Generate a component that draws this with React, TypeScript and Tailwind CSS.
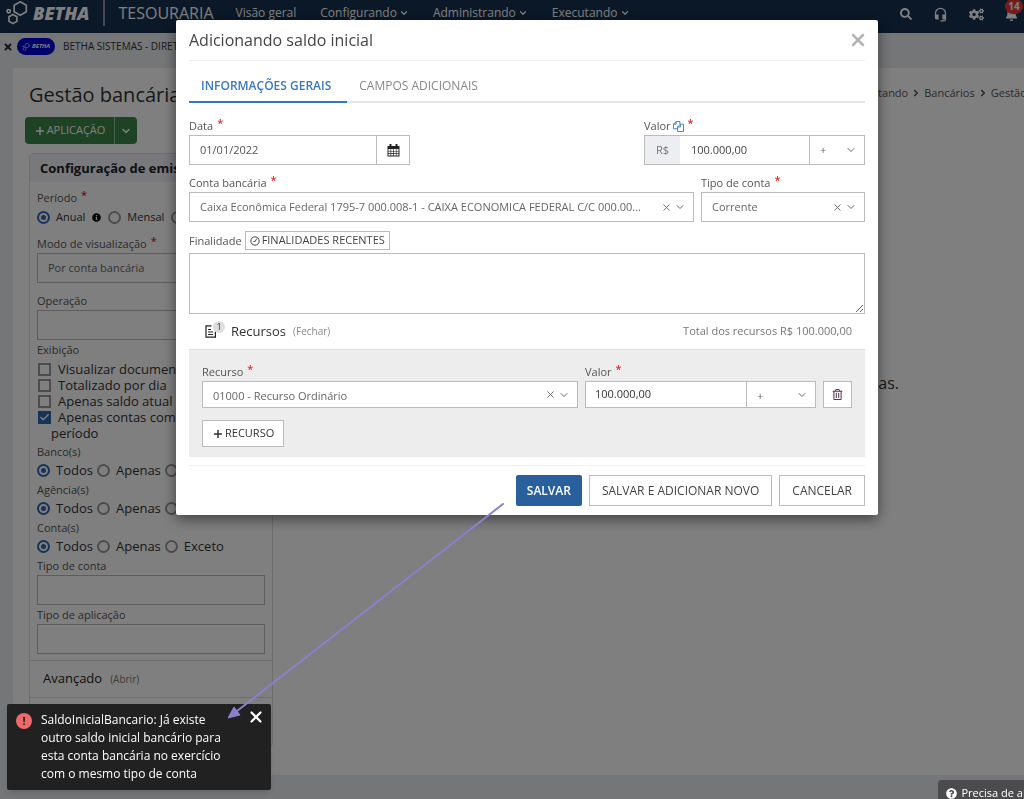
import type { ReactNode } from "react";
import { Check, ChevronDown, ChevronRight, Plus, X } from "lucide-react";
import { FaBell, FaCogs, FaInfoCircle, FaQuestionCircle, FaRegTrashAlt, FaSearch } from "react-icons/fa";
import { MdHeadsetMic } from "react-icons/md";

interface FieldLabelProps {
  htmlFor?: string;
  required?: boolean;
  children: ReactNode;
}

function FieldLabel({ htmlFor, required, children }: FieldLabelProps) {
  return (
    <label htmlFor={htmlFor} className="flex h-[19px] items-center pt-[2px] text-[11px] font-medium text-[#555]">
      {children}
      {required && <span className="mb-2 ml-1 text-[11px] leading-none font-semibold text-[#e02b2b]">*</span>}
    </label>
  );
}

interface SelectBoxProps {
  id: string;
  value: string;
  label?: string;
  clearable?: boolean;
  className?: string;
}

function SelectBox({ id, value, label, clearable, className = "h-[30px]" }: SelectBoxProps) {
  return (
    <div className={`relative border border-[#bbb] bg-white ${className}`}>
      <select
        id={id}
        aria-label={label}
        className="h-full w-full appearance-none truncate bg-transparent pr-8 pl-[10px] text-[11px] text-[#666] outline-none"
      >
        <option>{value}</option>
      </select>
      <div className="pointer-events-none absolute inset-y-0 right-[7px] flex items-center gap-[2px] text-[#666]">
        {clearable && (
          <button type="button" aria-label="Limpar" className="pointer-events-auto">
            <X className="size-[11px]" strokeWidth={2} />
          </button>
        )}
        <ChevronDown className="size-3" strokeWidth={2} />
      </div>
    </div>
  );
}

interface RadioProps {
  name: string;
  label: string;
  checked?: boolean;
  small?: boolean;
}

function Radio({ name, label, checked, small }: RadioProps) {
  return (
    <label className={`flex items-center gap-[6px] text-[#333] ${small ? "text-[11px]" : "text-[13px]"}`}>
      <input
        type="radio"
        name={name}
        defaultChecked={checked}
        className="size-[13px] appearance-none rounded-full border-2 border-[#999] bg-clip-content p-[2px] checked:border-[#2f67b5] checked:bg-[#2f67b5]"
      />
      {label}
    </label>
  );
}

function RadioGroup({ title, name }: { title: string; name: string }) {
  return (
    <fieldset>
      <legend className="h-[19px] text-[11px] leading-[19px] font-medium text-[#555]">{title}</legend>
      <div className="flex h-[19px] items-center gap-1">
        <Radio name={name} label="Todos" checked />
        <Radio name={name} label="Apenas" />
        <Radio name={name} label="Exceto" />
      </div>
    </fieldset>
  );
}

function CheckItem({ label, checked }: { label: string; checked?: boolean }) {
  return (
    <label className="relative block pl-[14px] text-[13px] leading-4 text-[#333]">
      <input
        type="checkbox"
        defaultChecked={checked}
        className="peer absolute top-[2px] left-[1px] size-[13px] appearance-none border-2 border-[#999] checked:border-[#2f67b5] checked:bg-[#2f67b5]"
      />
      <Check className="absolute top-[3px] left-[2px] hidden size-[11px] text-white peer-checked:block" strokeWidth={3} />
      <span className="ml-[7px]">{label}</span>
    </label>
  );
}

function HexLogo({ className }: { className: string }) {
  return (
    <svg viewBox="0 0 24 26" className={className} fill="none" stroke="currentColor" strokeWidth="1.8" aria-hidden="true">
      <path d="M15.5.9l6.6 3.8v7l-6.6 3.8-6.6-3.8v-7z" />
      <path d="M7.6 14.6l4.3 2.5v4.9l-4.3 2.5-4.3-2.5v-4.9z" />
      <circle cx="3" cy="11" r="1.8" />
    </svg>
  );
}

function TopBar() {
  const menus = ["Configurando", "Administrando", "Executando"];

  return (
    <header className="flex h-[33px] items-center bg-[#15304f] pb-[7px] pl-[5px] text-white">
      <HexLogo className="h-6 w-6" />
      <span className="ml-1 text-[18px] leading-6 font-extrabold italic">BETHA</span>
      <span className="ml-[14px] h-[26px] w-[2px] bg-[#8b93a8]" />
      <span className="ml-[13px] text-base leading-6">TESOURARIA</span>
      <nav className="ml-[22px] flex gap-6 text-xs">
        <a href="#geral">Visão geral</a>
        {menus.map((menu) => (
          <a key={menu} href={`#${menu.toLowerCase()}`} className="flex items-center gap-[2px]">
            {menu}
            <ChevronDown className="size-[10px]" strokeWidth={3} />
          </a>
        ))}
      </nav>
      <div className="ml-auto flex items-center gap-[21px] pt-[2px]">
        <button type="button" aria-label="Pesquisar">
          <FaSearch className="size-3" />
        </button>
        <button type="button" aria-label="Suporte">
          <MdHeadsetMic className="size-[15px]" />
        </button>
        <button type="button" aria-label="Configurações">
          <FaCogs className="size-[15px]" />
        </button>
        <button type="button" aria-label="Notificações" className="relative mr-[6px]">
          <FaBell className="size-[13px]" />
          <span className="absolute -top-[9px] left-0 flex h-[15px] w-[18px] items-center justify-center rounded-full bg-[#e5393b] text-[10px] font-bold">
            14
          </span>
        </button>
      </div>
    </header>
  );
}

function Sidebar() {
  return (
    <aside className="w-[244px] rounded-sm border border-[#ddd]">
      <h2 className="h-7 bg-[#f1f3f8] pl-[10px] text-[13px] leading-7 font-bold text-[#222]">
        Configuração de emissão
      </h2>
      <div className="px-[7px] pt-[6px] pb-[6px]">
        <FieldLabel required>Período</FieldLabel>
        <div className="flex h-5 items-center gap-[7px] overflow-hidden">
          <Radio name="periodo" label="Anual" checked small />
          <FaInfoCircle className="size-[9px] text-black" />
          <Radio name="periodo" label="Mensal" small />
          <Radio name="periodo" label="Diário" small />
        </div>
        <div className="mt-[7px]">
          <FieldLabel htmlFor="modo" required>
            Modo de visualização
          </FieldLabel>
          <SelectBox id="modo" value="Por conta bancária" />
        </div>
        <div className="mt-2">
          <FieldLabel htmlFor="operacao">Operação</FieldLabel>
          <input id="operacao" className="block h-[30px] w-full border border-[#bbb] bg-white px-[10px] text-xs" />
        </div>
        <fieldset className="mb-[1px]">
          <legend className="h-[21px] text-[11px] leading-5 font-medium text-[#555]">Exibição</legend>
          <CheckItem label="Visualizar documentos" />
          <CheckItem label="Totalizado por dia" />
          <CheckItem label="Apenas saldo atual" />
          <CheckItem label="Apenas contas com mov. no período" checked />
        </fieldset>
        <RadioGroup title="Banco(s)" name="bancos" />
        <RadioGroup title="Agência(s)" name="agencias" />
        <RadioGroup title="Conta(s)" name="contas" />
        <FieldLabel htmlFor="tipo-conta-filtro">Tipo de conta</FieldLabel>
        <input id="tipo-conta-filtro" className="block h-[30px] w-full border border-[#bbb] bg-white px-[10px] text-xs" />
        <FieldLabel htmlFor="tipo-aplicacao">Tipo de aplicação</FieldLabel>
        <input id="tipo-aplicacao" className="block h-[30px] w-full border border-[#bbb] bg-white px-[10px] text-xs" />
      </div>
      <button
        type="button"
        className="flex h-[38px] w-full items-center gap-2 border-y border-[#ddd] pl-[13px] text-[13px] text-[#222]"
      >
        Avançado <span className="text-[10px] text-[#777]">(Abrir)</span>
      </button>
      <div className="h-12" />
    </aside>
  );
}

function Page() {
  return (
    <div className="min-h-screen overflow-hidden bg-[#e9ecf1]">
      <TopBar />
      <div className="flex h-[35px] items-center pb-2 pl-[3px] text-[10px] text-[#333]">
        <button type="button" aria-label="Fechar entidade">
          <X className="size-[10px]" strokeWidth={5} />
        </button>
        <span className="ml-1 flex h-[17px] w-[38px] items-center justify-center gap-[2px] rounded-full bg-[#0000d8] text-[6px] font-bold text-white italic">
          <HexLogo className="size-2" />
          BETHA
        </span>
        <span className="ml-2">BETHA SISTEMAS - DIRETORIA</span>
      </div>
      <main className="ml-[13px] bg-white pt-[11px] pb-7">
        <div className="flex h-8 items-center justify-between pl-4">
          <h1 className="text-xl text-[#333]">Gestão bancária</h1>
          <nav
            aria-label="Trilha"
            className="-mr-[50px] flex items-center gap-1 pb-1 text-[11px] whitespace-nowrap text-[#555]"
          >
            <a href="#executando">Executando</a>
            <ChevronRight className="-mx-px size-[10px]" strokeWidth={4} />
            <a href="#bancarios">Bancários</a>
            <ChevronRight className="-mx-px size-[10px]" strokeWidth={4} />
            <span>Gestão bancária</span>
          </nav>
        </div>
        <div className="mt-[6px] ml-3 flex h-[27px] w-28 rounded-sm bg-[#3a8549] text-[11px] text-white">
          <button type="button" className="flex flex-1 items-center justify-center gap-[1px]">
            <Plus className="size-3" strokeWidth={3} />
            APLICAÇÃO
          </button>
          <button
            type="button"
            aria-label="Mais opções"
            className="flex w-[23px] items-center justify-center border-l border-[#8cc498]"
          >
            <ChevronDown className="size-3" strokeWidth={3} />
          </button>
        </div>
        <div className="mt-[9px] flex pl-4">
          <Sidebar />
          <p className="flex-1 pt-[218px] pr-[125px] text-right text-base text-[#333]">Não há contas.</p>
        </div>
      </main>
    </div>
  );
}

function CalendarIcon() {
  return (
    <svg viewBox="0 0 13 13" className="size-[13px]" aria-hidden="true">
      <path d="M.5 2h12v10.5H.5z" fill="#222" />
      <path d="M3.5 0v3M9.5 0v3" stroke="#222" strokeWidth="2" />
      <path
        d="M1.5 5h2v2h-2zM4.2 5h2v2h-2zM6.9 5h2v2h-2zM9.5 5h2v2h-2zM1.5 7.6h2v1.7h-2zM4.2 7.6h2v1.7h-2zM6.9 7.6h2v1.7h-2zM9.5 7.6h2v1.7h-2zM1.5 10h2v1.6h-2zM4.2 10h2v1.6h-2zM6.9 10h2v1.6h-2zM9.5 10h2v1.6h-2z"
        fill="#fff"
      />
    </svg>
  );
}

function CopyIcon() {
  return (
    <svg viewBox="0 0 12 12" className="size-[11px]" fill="none" stroke="#2f77c4" aria-hidden="true">
      <path d="M5 8.5H.5v-5l3-3h4v3" />
      <path d="M3.5.5v3h-3" />
      <path d="M8 3.5h3.5v8H5v-5z" />
      <path d="M8 3.5v3H5" />
    </svg>
  );
}

function ClockIcon() {
  return (
    <svg viewBox="0 0 12 12" className="size-[10px]" fill="none" stroke="currentColor" strokeWidth="1.2" aria-hidden="true">
      <circle cx="6" cy="6" r="5" />
      <path d="M8 3.2L6.2 6.5H4" />
    </svg>
  );
}

function DocumentIcon() {
  return (
    <svg viewBox="0 0 12 13" className="h-[13px] w-3" fill="none" stroke="#222" strokeWidth="1.2" aria-hidden="true">
      <path d="M6.5.8H1v11.4h9.4V6" />
      <path d="M3 4.5h3M3 7h5M3 9.5h5" />
    </svg>
  );
}

function InitialBalanceDialog() {
  const outline = "h-[31px] border border-[#bbb] bg-white px-3";

  return (
    <form
      role="dialog"
      aria-labelledby="dialog-title"
      className="min-w-0 flex-1 rounded-xs bg-white px-[13px] pb-[9px] shadow-[0_4px_14px_rgba(0,0,0,0.5)]"
    >
      <div className="flex h-[41px] items-center justify-between border-b border-[#f0f0f0]">
        <h2 id="dialog-title" className="text-base text-[#444]">
          Adicionando saldo inicial
        </h2>
        <button type="button" aria-label="Fechar" className="-mr-[3px] text-[#b5b5b5]">
          <X className="size-5" strokeWidth={3} />
        </button>
      </div>

      <div role="tablist" className="mt-2 flex h-[34px] border-b-2 border-[#e6e6e6] text-xs">
        <button
          type="button"
          role="tab"
          aria-selected="true"
          className="h-[34px] border-b-2 border-[#2f77c4] pt-[2px] pr-4 pl-3 font-semibold text-[#3a78c2]"
        >
          INFORMAÇÕES GERAIS
        </button>
        <button type="button" role="tab" aria-selected="false" className="px-3 pt-[2px] text-[#888]">
          CAMPOS ADICIONAIS
        </button>
      </div>

      <div className="mt-[13px] flex justify-between">
        <div className="w-[221px]">
          <FieldLabel htmlFor="data" required>
            Data
          </FieldLabel>
          <div className="flex h-[30px] border border-[#bbb]">
            <input id="data" defaultValue="01/01/2022" className="min-w-0 flex-1 px-[10px] text-[11px] text-[#555]" />
            <button
              type="button"
              aria-label="Abrir calendário"
              className="flex w-[33px] items-center justify-center border-l border-[#bbb]"
            >
              <CalendarIcon />
            </button>
          </div>
        </div>
        <div className="w-[221px]">
          <FieldLabel htmlFor="valor" required>
            <span className="mr-[2px]">Valor</span>
            <CopyIcon />
          </FieldLabel>
          <div className="flex h-[30px]">
            <span className="flex w-9 items-center justify-center border-y border-l border-[#bbb] bg-[#eceef2] text-[11px] text-[#777]">
              R$
            </span>
            <input
              id="valor"
              defaultValue="100.000,00"
              className="min-w-0 flex-1 border-y border-[#bbb] px-[11px] text-[11px] text-[#444]"
            />
            <SelectBox id="sinal" label="Sinal" value="+" className="w-14" />
          </div>
        </div>
      </div>

      <div className="mt-2 flex gap-[7px]">
        <div className="min-w-0 flex-1">
          <FieldLabel htmlFor="conta" required>
            Conta bancária
          </FieldLabel>
          <SelectBox
            id="conta"
            value="Caixa Econômica Federal 1795-7 000.008-1 - CAIXA ECONOMICA FEDERAL C/C 000.00..."
            clearable
          />
        </div>
        <div className="w-[164px]">
          <FieldLabel htmlFor="tipo-conta" required>
            Tipo de conta
          </FieldLabel>
          <SelectBox id="tipo-conta" value="Corrente" clearable />
        </div>
      </div>

      <div className="mt-[9px] flex items-center gap-[3px]">
        <FieldLabel htmlFor="finalidade">Finalidade</FieldLabel>
        <button
          type="button"
          className="flex h-[19px] items-center gap-[2px] border border-[#bbb] px-1 text-[11px] text-[#444]"
        >
          <ClockIcon />
          FINALIDADES RECENTES
        </button>
      </div>
      <textarea id="finalidade" className="mt-[3px] block h-[61px] w-full border border-[#bbb] px-[10px] text-xs" />

      <div className="flex h-[35px] items-center justify-between px-[13px]">
        <button type="button" className="flex items-center text-[13px] text-[#333]">
          <span className="relative mr-[14px] ml-[3px]">
            <DocumentIcon />
            <span className="absolute -top-1 left-2 flex size-3 items-center justify-center rounded-full bg-[#ddd] text-[9px]">
              1
            </span>
          </span>
          Recursos <span className="ml-[7px] text-[10px] text-[#888]">(Fechar)</span>
        </button>
        <span className="text-[11px] text-[#777]">Total dos recursos R$ 100.000,00</span>
      </div>

      <div className="border-t border-[#ddd] bg-[#ededed] px-[13px] pt-3 pb-[10px]">
        <div className="flex items-end">
          <div className="min-w-0 flex-1">
            <FieldLabel htmlFor="recurso" required>
              Recurso
            </FieldLabel>
            <SelectBox id="recurso" value="01000 - Recurso Ordinário" clearable className="h-[27px]" />
          </div>
          <div className="ml-[7px] w-[231px]">
            <FieldLabel htmlFor="valor-recurso" required>
              Valor
            </FieldLabel>
            <div className="flex h-[27px]">
              <input
                id="valor-recurso"
                defaultValue="100.000,00"
                className="min-w-0 flex-1 border-y border-l border-[#bbb] bg-white px-[9px] text-[11px] text-[#333]"
              />
              <SelectBox id="sinal-recurso" label="Sinal do recurso" value="+" className="w-[70px]" />
            </div>
          </div>
          <button
            type="button"
            aria-label="Excluir recurso"
            className="ml-[7px] flex h-[27px] w-[29px] items-center justify-center border border-[#bbb] bg-white text-[#5b3552]"
          >
            <FaRegTrashAlt className="size-[11px]" />
          </button>
        </div>
        <button
          type="button"
          className="mt-3 flex h-[27px] items-center gap-[1px] border border-[#bbb] bg-white px-[9px] text-[11px] text-[#333]"
        >
          <Plus className="size-3" strokeWidth={3} />
          RECURSO
        </button>
      </div>

      <div className="mt-2 flex justify-end gap-[7px] border-t border-[#f0f0f0] pt-[9px] text-xs text-[#444]">
        <button type="submit" className="h-[31px] rounded-xs bg-[#2a5f9e] px-[11px] font-semibold text-white">
          SALVAR
        </button>
        <button type="button" className={outline}>
          SALVAR E ADICIONAR NOVO
        </button>
        <button type="button" className={outline}>
          CANCELAR
        </button>
      </div>
    </form>
  );
}

function ErrorToast() {
  return (
    <div
      role="alert"
      className="fixed bottom-[9px] left-[7px] flex w-[264px] items-start rounded-xs bg-[#212121] px-[9px] py-[7px] text-white shadow-md"
    >
      <span className="mt-[2px] flex size-4 shrink-0 items-center justify-center rounded-full bg-[#ee6a6a] text-[11px] font-bold text-[#212121]">
        !
      </span>
      <p className="ml-[9px] flex-1 pr-2 text-xs leading-[18px] font-medium">
        SaldoInicialBancario: Já existe outro saldo inicial bancário para esta conta bancária no exercício com o mesmo
        tipo de conta
      </p>
      <button type="button" aria-label="Fechar aviso" className="-mt-[3px] -mr-[3px] ml-2">
        <X className="size-[18px]" strokeWidth={3} />
      </button>
    </div>
  );
}

// Arrow linking the save button to the message it raised
function PointerArrow() {
  return (
    <svg
      viewBox="0 0 276 216"
      className="pointer-events-none fixed top-[503px] left-[228px] h-[216px] w-[276px]"
      fill="#8a80cc"
      stroke="#8a80cc"
      aria-hidden="true"
    >
      <path d="M275 1L9 208" strokeWidth="2" strokeLinecap="round" />
      <path d="M0 215l6-11 6 8z" strokeWidth="1" />
    </svg>
  );
}

export default function App() {
  return (
    <div className="font-['Open_Sans',sans-serif]">
      <Page />
      <div className="fixed inset-0 flex items-start bg-black/50 pt-5 pr-[146px] pl-44">
        <InitialBalanceDialog />
      </div>
      <a
        href="#ajuda"
        className="fixed -right-[26px] bottom-0 flex h-[19px] items-center gap-1 rounded-tl-sm bg-[#4b4b4d] pt-[7px] pl-2 text-[11px] font-medium whitespace-nowrap text-white"
      >
        <FaQuestionCircle className="size-[11px]" />
        Precisa de ajuda?
      </a>
      <ErrorToast />
      <PointerArrow />
    </div>
  );
}
